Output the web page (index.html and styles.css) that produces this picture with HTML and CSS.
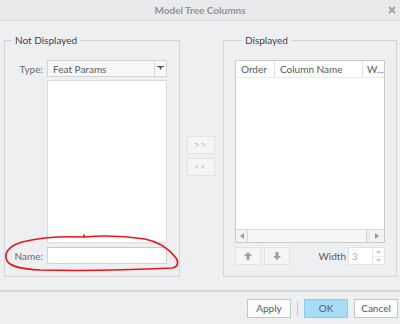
FILE: index.html
```html
<!DOCTYPE html>
<html>
<head>
<title>Model Tree Columns</title>
<link rel="stylesheet" href="styles.css">
</head>
<body>
  <div class="dialog">
    <div class="titlebar">
      <span></span>
      <span class="title">Model Tree Columns</span>
      <span class="close">
        <svg width="8" height="8" viewBox="0 0 8 8"><path d="M1 1 L7 7 M7 1 L1 7" stroke="#a3a3a3" stroke-width="2"/></svg>
      </span>
    </div>

    <div class="main">
      <fieldset class="group left-group">
        <legend>Not Displayed</legend>
        <div class="form">
          <label class="lbl">Type:</label>
          <div class="select">
            <span class="select-text">Feat Params</span>
            <span class="select-arrow">
              <svg width="7" height="5" viewBox="0 0 7 5"><path d="M0 0 H7 V1 H5 L3.5 4 L2 1 H0 Z" fill="#555"/></svg>
            </span>
          </div>
          <span></span>
          <div class="listbox"></div>
          <label class="lbl">Name:</label>
          <input type="text" class="name-input">
        </div>
      </fieldset>

      <div class="movers">
        <button type="button" class="mover">&gt;&gt;</button>
        <button type="button" class="mover">&lt;&lt;</button>
      </div>

      <fieldset class="group right-group">
        <legend>Displayed</legend>
        <div class="table">
          <div class="thead">
            <div class="th col-order">Order</div>
            <div class="th col-name">Column Name</div>
            <div class="th col-width">W...</div>
          </div>
          <div class="tbody"></div>
          <div class="hscroll">
            <span class="scroll-btn">
              <svg width="4" height="6" viewBox="0 0 4 6"><path d="M4 0 V6 L0 3 Z" fill="#999"/></svg>
            </span>
            <span class="scroll-thumb"></span>
            <span class="scroll-btn right">
              <svg width="4" height="6" viewBox="0 0 4 6"><path d="M0 0 V6 L4 3 Z" fill="#999"/></svg>
            </span>
          </div>
        </div>
        <div class="order-row">
          <button type="button" class="arrow-btn">
            <svg width="8" height="8" viewBox="0 0 8 8"><path d="M4 0 L8 4 H5.5 V8 H2.5 V4 H0 Z" fill="#a0a0a0"/></svg>
          </button>
          <button type="button" class="arrow-btn">
            <svg width="8" height="8" viewBox="0 0 8 8"><path d="M4 8 L8 4 H5.5 V0 H2.5 V4 H0 Z" fill="#a0a0a0"/></svg>
          </button>
          <span class="spacer"></span>
          <span class="width-lbl">Width</span>
          <div class="spinner">
            <span class="spin-value">3</span>
            <span class="spin-arrows">
              <span class="spin-half"><svg width="5" height="3" viewBox="0 0 5 3"><path d="M2.5 0 L5 3 H0 Z" fill="#c4c4c4"/></svg></span>
              <span class="spin-half"><svg width="5" height="3" viewBox="0 0 5 3"><path d="M0 0 H5 L2.5 3 Z" fill="#c4c4c4"/></svg></span>
            </span>
          </div>
        </div>
      </fieldset>
    </div>

    <div class="footer">
      <button type="button" class="btn">Apply</button>
      <span class="sep"></span>
      <button type="button" class="btn primary">OK</button>
      <button type="button" class="btn">Cancel</button>
    </div>

    <!-- red hand-drawn mark around the Name field -->
    <svg class="scribble" width="190" height="50" viewBox="0 228 190 50">
      <path d="M84 237 C62 236 38 238 22 242 C9 246 3 253 7 261 C11 267 22 269 40 270 C80 271 130 270 172 268 C178 267 179 262 176 258 C170 250 160 242 145 239 C125 236 105 235 84 237 L84 235"
            fill="none" stroke="#e8141a" stroke-width="1.6" stroke-linecap="round"/>
    </svg>
  </div>
</body>
</html>
```

FILE: styles.css
```css
body {
  margin: 0;
  background-color: #eeeff1;
  font-family: Lato, "Open Sans", sans-serif;
  font-size: 10px;
  color: #5a5a5a;
}
.dialog {
  position: relative;
  width: 400px;
  height: 324px;
  display: flex;
  flex-direction: column;
}
.titlebar {
  height: 20px;
  border-bottom: 1px solid #dcdde0;
  background-color: #e9eaec;
  display: grid;
  grid-template-columns: 1fr auto 1fr;
  align-items: center;
}
.title {
  font-weight: bold;
  color: #929292;
}
.close {
  justify-self: end;
  padding-right: 4px;
  display: flex;
}
.main {
  flex: 1;
  display: flex;
  align-items: stretch;
  padding: 13px 3px 13px 4px;
}
.group {
  margin: 0;
  padding: 0;
  border: 1px solid #d4d5d8;
  box-sizing: border-box;
  min-width: 0;
}
.group legend {
  margin-left: 7px;
  padding: 0 3px;
  line-height: 13px;
  color: #444;
}
.left-group {
  width: 176px;
}
.right-group {
  width: 174px;
  padding-left: 11px;
}
.form {
  display: grid;
  grid-template-columns: 42px 120px;
  align-items: center;
  padding-top: 13px;
}
.lbl {
  text-align: right;
  padding-right: 4px;
  color: #6a6a6a;
}
.select {
  height: 17px;
  box-sizing: border-box;
  border: 1px solid #d3d4d6;
  background-color: #f7f7f8;
  display: flex;
  align-items: center;
}
.select-text {
  flex: 1;
  padding-left: 5px;
}
.select-arrow {
  width: 11px;
  height: 100%;
  border-left: 1px solid #d3d4d6;
  display: flex;
  align-items: center;
  justify-content: center;
}
.listbox {
  height: 163px;
  margin: 3px 0 4px;
  box-sizing: border-box;
  border: 1px solid #dcdddf;
  background-color: white;
}
.name-input {
  height: 17px;
  width: 120px;
  box-sizing: border-box;
  border: 1px solid #d2d3d5;
  border-top-color: #c8c9cb;
  background-color: white;
  padding: 0;
  margin: 0;
}
.movers {
  width: 43px;
  display: flex;
  flex-direction: column;
  align-items: center;
  justify-content: center;
  gap: 4px;
}
.mover {
  width: 28px;
  height: 18px;
  margin-right: 2px;
  padding: 0;
  border: 1px solid #e1e2e4;
  background-color: #f4f5f6;
  color: #b8b8b8;
  font-family: inherit;
  font-size: 9px;
  letter-spacing: 1px;
}
.table {
  width: 150px;
  height: 183px;
  margin-top: 13px;
  box-sizing: border-box;
  border: 1px solid #c9cacd;
  background-color: white;
  display: flex;
  flex-direction: column;
}
.thead {
  height: 16px;
  display: flex;
  border-bottom: 1px solid #ebebeb;
}
.th {
  display: flex;
  align-items: center;
  padding-left: 5px;
  box-sizing: border-box;
}
.col-order {
  width: 39px;
  border-right: 1px solid #e2e2e2;
}
.col-name {
  width: 88px;
  border-right: 1px solid #e2e2e2;
}
.col-width {
  flex: 1;
  padding-left: 4px;
}
.tbody {
  flex: 1;
}
.hscroll {
  height: 12px;
  display: flex;
  background-color: #e9e9ea;
  border-top: 1px solid #d9d9db;
}
.scroll-btn {
  width: 11px;
  display: flex;
  align-items: center;
  justify-content: center;
  background-color: #f3f3f4;
}
.scroll-btn.right {
  width: 14px;
  margin-left: 3px;
}
.scroll-thumb {
  flex: 1;
  background-color: #f6f6f7;
  border-left: 1px solid #d6d6d8;
  border-right: 1px solid #d6d6d8;
}
.order-row {
  width: 150px;
  display: flex;
  align-items: center;
  margin-top: 4px;
}
.arrow-btn {
  width: 26px;
  height: 18px;
  margin-right: 3px;
  padding: 0;
  border: 1px solid #e2e3e5;
  background-color: #f5f5f6;
  display: flex;
  align-items: center;
  justify-content: center;
}
.spacer {
  flex: 1;
}
.width-lbl {
  color: #5a5a5a;
  margin-right: 2px;
}
.spinner {
  width: 37px;
  height: 18px;
  box-sizing: border-box;
  border: 1px solid #e0e1e3;
  background-color: white;
  display: flex;
}
.spin-value {
  flex: 1;
  padding-left: 3px;
  color: #b0b0b0;
  display: flex;
  align-items: center;
}
.spin-arrows {
  width: 11px;
  border-left: 1px solid #e6e6e6;
  display: flex;
  flex-direction: column;
}
.spin-half {
  flex: 1;
  display: flex;
  align-items: center;
  justify-content: center;
}
.spin-half + .spin-half {
  border-top: 1px solid #ececec;
}
.footer {
  height: 34px;
  border-top: 2px solid #d6d7da;
  display: flex;
  align-items: center;
  justify-content: flex-end;
  padding-right: 2px;
  gap: 6px;
  box-sizing: border-box;
}
.btn {
  width: 44px;
  height: 19px;
  padding: 0;
  border: 1px solid #c5c6c8;
  background-color: #fbfbfb;
  color: #5a5a5a;
  font-family: inherit;
  font-size: 10px;
}
.btn.primary {
  background-color: #a6dcf6;
  border-color: #8ecbe8;
}
.sep {
  width: 1px;
  height: 15px;
  background-color: #c8c9cb;
}
.scribble {
  position: absolute;
  left: 0;
  top: 228px;
}
```
